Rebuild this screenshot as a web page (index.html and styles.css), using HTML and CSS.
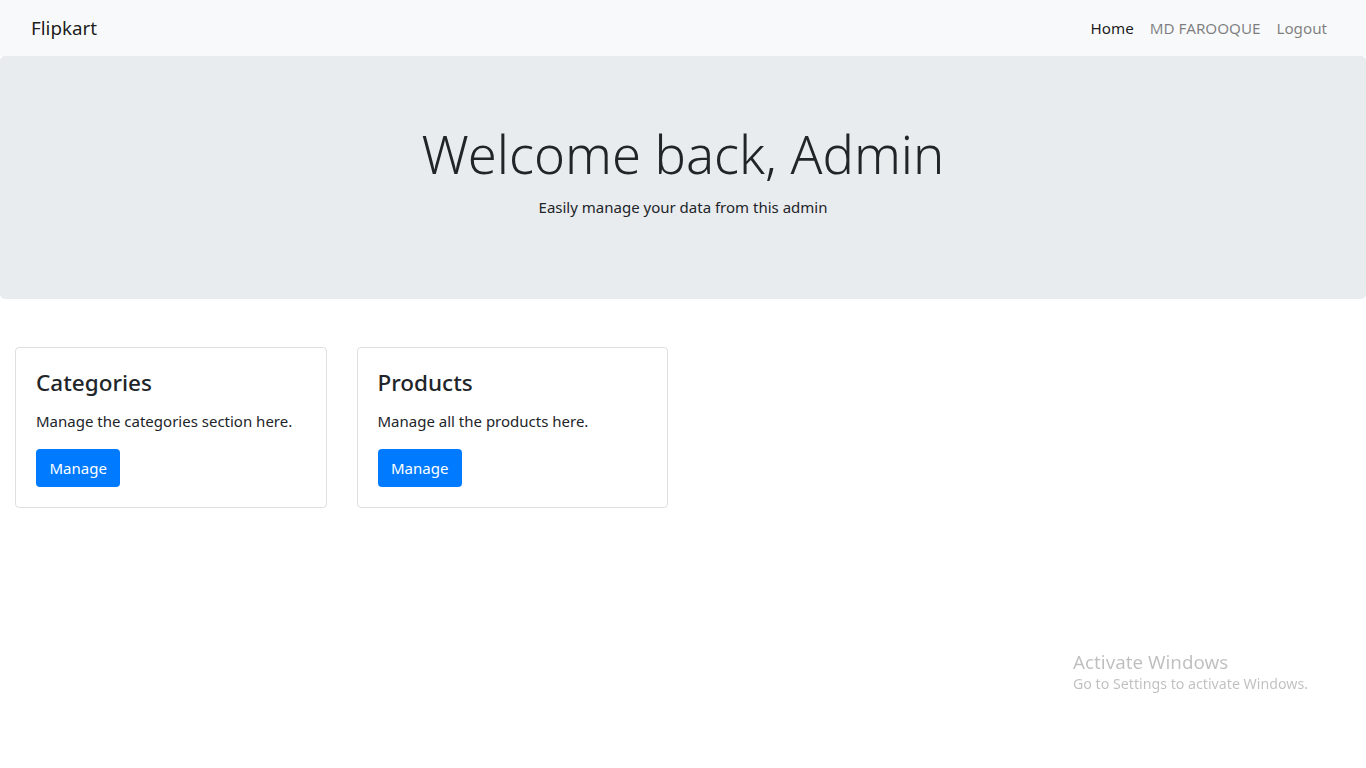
FILE: index.html
```html
<!DOCTYPE html>
<html>
<head>
    <title>Flipkart Admin</title>
    <link rel="stylesheet" href="styles.css">
</head>
<body>
    <nav class="navbar">
        <div class="nav-inner">
            <a class="brand" href="#">Flipkart</a>
            <ul class="nav-links">
                <li><a class="nav-link active" href="#">Home</a></li>
                <li><a class="nav-link" href="#">MD FAROOQUE</a></li>
                <li><a class="nav-link" href="#">Logout</a></li>
            </ul>
        </div>
    </nav>

    <div class="jumbotron">
        <h1 class="display">Welcome back, Admin</h1>
        <p>Easily manage your data from this admin</p>
    </div>

    <div class="container">
        <div class="row">
            <div class="col">
                <div class="card">
                    <div class="card-body">
                        <h4 class="card-title">Categories</h4>
                        <p class="card-text">Manage the categories section here.</p>
                        <a href="#" class="btn">Manage</a>
                    </div>
                </div>
            </div>
            <div class="col">
                <div class="card">
                    <div class="card-body">
                        <h4 class="card-title">Products</h4>
                        <p class="card-text">Manage all the products here.</p>
                        <a href="#" class="btn">Manage</a>
                    </div>
                </div>
            </div>
        </div>
    </div>

    <!-- marca d'agua do windows -->
    <div class="watermark">
        <div class="wm-title">Activate Windows</div>
        <div class="wm-sub">Go to Settings to activate Windows.</div>
    </div>
</body>
</html>
```

FILE: styles.css
```css
* {
    box-sizing: border-box;
}

body {
    margin: 0;
    font-family: "Noto Sans", "Open Sans", sans-serif;
    font-size: 15px;
    line-height: 24px;
    color: #212529;
    background: #fff;
}

a {
    text-decoration: none;
}

.navbar {
    background: #f8f9fa;
    padding: 8px 16px;
    height: 56px;
}

.nav-inner {
    display: flex;
    justify-content: space-between;
    align-items: center;
    padding: 0 15px;
    height: 40px;
}

.brand {
    font-size: 18.8px;
    line-height: 30px;
    color: rgba(0, 0, 0, 0.9);
}

.nav-links {
    display: flex;
    list-style: none;
    margin: 0;
    padding: 0;
}

.nav-link {
    display: block;
    padding: 8px 8px;
    font-size: 15.2px;
    color: rgba(0, 0, 0, 0.5);
}

.nav-link.active {
    color: rgba(0, 0, 0, 0.9);
}

.jumbotron {
    background: #e9ecef;
    border-radius: 4.8px;
    padding: 64px 32px;
    margin-bottom: 32px;
    text-align: center;
}

.display {
    font-size: 52.5px;
    font-weight: 300;
    line-height: 67px;
    margin: 0 0 8px;
}

.jumbotron p {
    margin: 0 0 16px;
}

.container {
    padding: 16px 15px 0;
}

.row {
    display: flex;
    margin: 0 -15px;
}

.col {
    width: 25%;
    padding: 0 15px;
}

.card {
    border: 1px solid rgba(0, 0, 0, 0.125);
    border-radius: 4px;
}

.card-body {
    padding: 20px;
}

.card-title {
    font-size: 22.5px;
    font-weight: 500;
    line-height: 29px;
    margin: 0 0 12px;
}

.card-text {
    margin: 0 0 16px;
}

.btn {
    display: inline-block;
    background: #007bff;
    color: #fff;
    padding: 7px 13.5px;
    border-radius: 4px;
    line-height: 24px;
}

.watermark {
    position: fixed;
    left: 1073px;
    top: 650px;
    color: rgba(0, 0, 0, 0.25);
    font-family: "Noto Sans", sans-serif;
}

.wm-title {
    font-size: 18.8px;
    line-height: 24px;
}

.wm-sub {
    font-size: 14.2px;
    line-height: 20px;
}
```
